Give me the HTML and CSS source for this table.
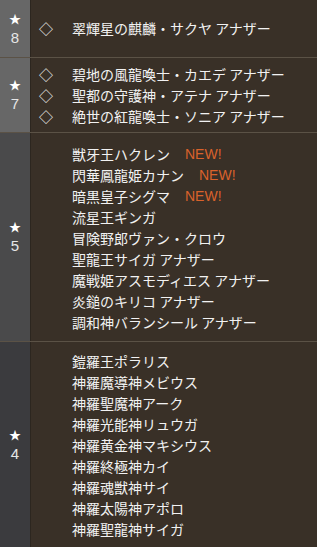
FILE: index.html
```html
<!DOCTYPE html>
<html lang="ja">
<head>
<meta charset="utf-8">
<link rel="stylesheet" href="styles.css">
</head>
<body>
<div class="table">
  <div class="row r8">
    <div class="rank"><span class="star">★</span><span class="num">8</span></div>
    <ul class="names">
      <li><span class="mark">◇</span>翠輝星の麒麟・サクヤ アナザー</li>
    </ul>
  </div>
  <div class="row r7">
    <div class="rank"><span class="star">★</span><span class="num">7</span></div>
    <ul class="names">
      <li><span class="mark">◇</span>碧地の風龍喚士・カエデ アナザー</li>
      <li><span class="mark">◇</span>聖都の守護神・アテナ アナザー</li>
      <li><span class="mark">◇</span>絶世の紅龍喚士・ソニア アナザー</li>
    </ul>
  </div>
  <div class="row r5">
    <div class="rank"><span class="star">★</span><span class="num">5</span></div>
    <ul class="names">
      <li><span class="mark"></span>獣牙王ハクレン<span class="new">NEW!</span></li>
      <li><span class="mark"></span>閃華鳳龍姫カナン<span class="new">NEW!</span></li>
      <li><span class="mark"></span>暗黒皇子シグマ<span class="new">NEW!</span></li>
      <li><span class="mark"></span>流星王ギンガ</li>
      <li><span class="mark"></span>冒険野郎ヴァン・クロウ</li>
      <li><span class="mark"></span>聖龍王サイガ アナザー</li>
      <li><span class="mark"></span>魔戦姫アスモディエス アナザー</li>
      <li><span class="mark"></span>炎鎚のキリコ アナザー</li>
      <li><span class="mark"></span>調和神バランシール アナザー</li>
    </ul>
  </div>
  <div class="row r4">
    <div class="rank"><span class="star">★</span><span class="num">4</span></div>
    <ul class="names">
      <li><span class="mark"></span>鎧羅王ポラリス</li>
      <li><span class="mark"></span>神羅魔導神メビウス</li>
      <li><span class="mark"></span>神羅聖魔神アーク</li>
      <li><span class="mark"></span>神羅光能神リュウガ</li>
      <li><span class="mark"></span>神羅黄金神マキシウス</li>
      <li><span class="mark"></span>神羅終極神カイ</li>
      <li><span class="mark"></span>神羅魂獣神サイ</li>
      <li><span class="mark"></span>神羅太陽神アポロ</li>
      <li><span class="mark"></span>神羅聖龍神サイガ</li>
    </ul>
  </div>
</div>
</body>
</html>
```

FILE: styles.css
```css
html, body {
  margin: 0;
  padding: 0;
  background: #393027;
}
body {
  font-family: "Noto Sans CJK JP", "Noto Sans", sans-serif;
  font-size: 14px;
  color: #f2f2f2;
}
.table {
  display: flex;
  flex-direction: column;
  width: 317px;
  min-height: 547px;
}
.row {
  display: flex;
  border-bottom: 1px solid #5b5246;
}
.row.r4 {
  flex: 1;
  border-bottom: none;
}
.rank {
  width: 30px;
  flex: none;
  display: flex;
  flex-direction: column;
  align-items: center;
  justify-content: center;
  gap: 2px;
  border-right: 1px solid #2c261f;
  color: #e6e6e6;
}
.r8 .rank, .r7 .rank { background: #676767; }
.r5 .rank { background: #4a4a4b; }
.r4 .rank { background: #3b3b3e; }
.star {
  font-size: 12px;
  line-height: 16px;
  color: #ffffff;
}
.num {
  font-family: "Liberation Sans", Arial, sans-serif;
  font-size: 15px;
  line-height: 18px;
}
.names {
  list-style: none;
  margin: 0;
  flex: 1;
  padding: 6px 0 5px 8px;
  display: flex;
  flex-direction: column;
  justify-content: center;
}
.r8 .names { min-height: 46px; padding-top: 5px; padding-bottom: 6px; }
.r5 .names { padding-top: 11px; padding-bottom: 8px; }
.r4 .names { justify-content: flex-start; padding-top: 9px; }
.names li {
  display: flex;
  line-height: 21px;
  height: 21px;
  white-space: nowrap;
}
.mark {
  width: 33px;
  flex: none;
  font-size: 14px;
}
.new {
  font-family: "Liberation Sans", Arial, sans-serif;
  color: #d9622b;
  margin-left: 15px;
}
```
